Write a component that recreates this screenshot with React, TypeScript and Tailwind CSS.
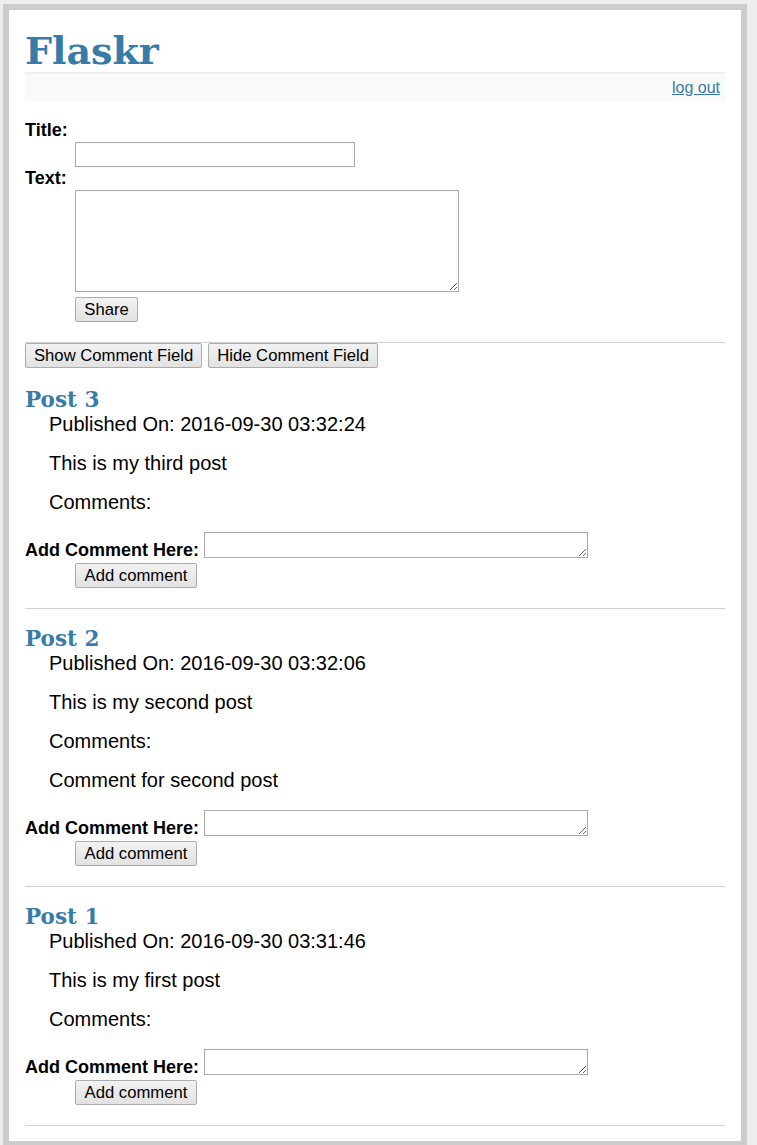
import React from 'react';

type Post = {
  title: string;
  published: string;
  text: string;
  comments: string[];
};

const posts: Post[] = [
  { title: 'Post 3', published: '2016-09-30 03:32:24', text: 'This is my third post', comments: [] },
  { title: 'Post 2', published: '2016-09-30 03:32:06', text: 'This is my second post', comments: ['Comment for second post'] },
  { title: 'Post 1', published: '2016-09-30 03:31:46', text: 'This is my first post', comments: [] },
];

const btn =
  'h-[25px] px-[8px] border border-[#acacac] rounded-[2px] bg-linear-to-b from-[#f2f2f2] to-[#e2e2e2] text-[16.67px] leading-[19px] text-black';

function PostEntry({ post }: { post: Post }) {
  return (
    <div>
      <h2 className="font-['DejaVu_Serif',Georgia,serif] font-bold text-[21.5px] leading-[26px] text-[#377ba8]">
        {post.title}
      </h2>
      <div className="pl-6 text-[20px] leading-[23px]">
        <p>Published On: {post.published}</p>
        <p className="mt-4">{post.text}</p>
        <p className="mt-4">Comments:</p>
        {post.comments.map((c) => (
          <p key={c} className="mt-4">
            {c}
          </p>
        ))}
      </div>
      <div className="mt-[18px] h-[26px] flex items-start">
        <label className="mt-[8px] text-[18px] leading-[21px] font-bold">Add Comment Here:</label>
        <textarea className="ml-[5px] w-[384px] h-[26px] border border-[#a9a9a9] bg-white" />
      </div>
      <div className="mt-[5px] ml-[50px]">
        <button className={`${btn} w-[122px]`}>Add comment</button>
      </div>
      <hr className="mt-[20px] border-0 border-t border-[#d0d0d0]" />
    </div>
  );
}

export default function App() {
  return (
    <div className="min-h-[1145px] bg-[#eeeeee] pt-[4px] pl-[3px] font-['Liberation_Sans',Arial,sans-serif] text-black">
      <div className="w-[744px] border-[6px] border-[#cccccc] bg-white px-[16px] pt-[16px] pb-[15px]">
        <h1 className="pt-[2px] h-[48px] border-b-2 border-[#eeeeee] font-['DejaVu_Serif',Georgia,serif] font-bold text-[38px] leading-[46px] text-[#377ba8]">
          Flaskr
        </h1>
        <div className="h-[28px] bg-[#fafafa] px-[5px] py-[5px] text-right text-[16px] leading-[18px]">
          <a href="#" className="text-[#377ba8] underline">
            log out
          </a>
        </div>

        <form className="mt-[18px]" onSubmit={(e) => e.preventDefault()}>
          <div className="text-[18px] leading-[21px] font-bold">Title:</div>
          <div className="mt-[1px] ml-[50px]">
            <input type="text" className="block w-[280px] h-[25px] border border-[#a9a9a9] bg-white" />
          </div>
          <div className="mt-[1px] text-[18px] leading-[21px] font-bold">Text:</div>
          <div className="mt-[1px] ml-[50px]">
            <textarea className="block w-[384px] h-[102px] border border-[#a9a9a9] bg-white" />
          </div>
          <div className="mt-[5px] ml-[50px]">
            <button className={`${btn} w-[63px]`}>Share</button>
          </div>
        </form>

        <hr className="mt-[20px] border-0 border-t border-[#d0d0d0]" />
        <div className="flex gap-[6px]">
          <button className={btn}>Show Comment Field</button>
          <button className={btn}>Hide Comment Field</button>
        </div>

        <div className="mt-[19px] flex flex-col gap-[17px]">
          {posts.map((p) => (
            <PostEntry key={p.title} post={p} />
          ))}
        </div>
      </div>
    </div>
  );
}
